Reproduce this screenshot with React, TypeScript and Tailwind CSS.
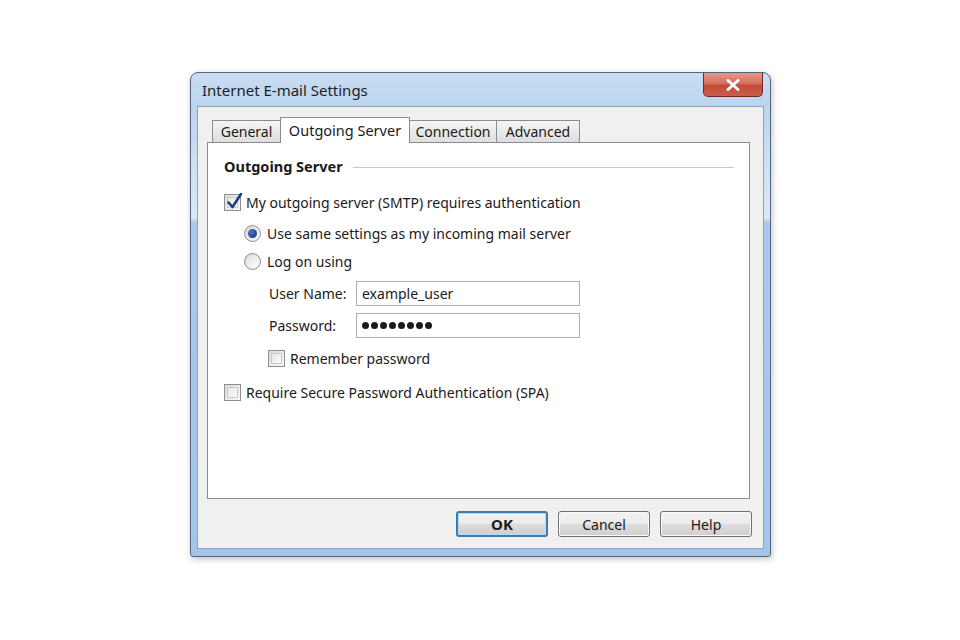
import React from "react";

const font = { fontFamily: '"Noto Sans", "Open Sans", Arial, sans-serif' };

function CheckBox({ checked }: { checked?: boolean }) {
  return (
    <div className="relative w-[17px] h-[17px] border border-[#8e8f8f] bg-gradient-to-br from-[#dcdcdc] to-[#f8f8f8] p-[2px] shrink-0">
      <div className="w-full h-full border border-[#c9c9c9] bg-gradient-to-br from-[#e6e6e6] to-[#fbfbfb]" />
      {checked && (
        <svg className="absolute left-[1px] top-[-3px]" width="17" height="18" viewBox="0 0 17 18">
          <path d="M2.5 10.5 L6.5 15 L15 2" fill="none" stroke="#1e3f7a" strokeWidth="2.6" strokeLinecap="round" strokeLinejoin="round" />
        </svg>
      )}
    </div>
  );
}

function Radio({ checked }: { checked?: boolean }) {
  return (
    <div className="w-[17px] h-[17px] rounded-full border border-[#8e8f8f] bg-gradient-to-br from-[#d6d6d6] to-[#fafafa] flex items-center justify-center shrink-0">
      {checked ? (
        <div className="w-[9px] h-[9px] rounded-full bg-[radial-gradient(circle_at_35%_35%,#4a78c2,#0f2d63)]" />
      ) : (
        <div className="w-[11px] h-[11px] rounded-full bg-gradient-to-br from-[#e2e2e2] to-[#ffffff]" />
      )}
    </div>
  );
}

function Tab({ label, active, w }: { label: string; active?: boolean; w: string }) {
  if (active) {
    return (
      <div className={`${w} h-[26px] -mb-px relative z-10 bg-white border border-[#898c95] border-b-0 flex items-center justify-center text-[14.5px] text-[#1a1a1a]`}>
        {label}
      </div>
    );
  }
  return (
    <div className={`${w} h-[22px] bg-gradient-to-b from-[#f5f5f5] to-[#dedede] border border-[#898c95] border-b-0 -ml-px first:ml-0 flex items-center justify-center text-[14px] text-[#1a1a1a]`}>
      {label}
    </div>
  );
}

function Button({ label, primary }: { label: string; primary?: boolean }) {
  return (
    <div
      className={`w-[92px] h-[26px] rounded-[3px] flex items-center justify-center text-[14px] text-[#1a1a1a] bg-[linear-gradient(#f2f2f2_0%,#ebebeb_50%,#dddddd_51%,#cfcfcf_100%)] ${
        primary ? "border-2 border-[#3d7bad] font-bold text-[15px] shadow-[inset_0_0_0_1px_#b8dcf4]" : "border border-[#707070] shadow-[inset_0_0_0_1px_#fbfbfb]"
      }`}
    >
      {label}
    </div>
  );
}

export default function App(): JSX.Element {
  return (
    <div className="w-[960px] h-[640px] bg-white pt-[72px] pl-[190px]" style={font}>
      {/* window */}
      <div className="w-[581px] h-[485px] rounded-t-[8px] rounded-b-[3px] border border-[#55657a] bg-[linear-gradient(180deg,#c9ddf3_0%,#bcd4ef_7%,#cfe1f4_20%,#dae8f6_30%,#a9c9ec_31%,#a3c5ea_100%)] flex flex-col shadow-[1px_2px_6px_rgba(0,0,0,0.25)]">
        {/* title bar */}
        <div className="h-[33px] flex items-start justify-between">
          <div className="pl-[11px] pt-[6px] text-[15px] text-[#1e1e1e]">Internet E-mail Settings</div>
          <div className="mr-[7px] w-[60px] h-[24px] rounded-b-[5px] border border-[#6e2a22] border-t-0 bg-[linear-gradient(#e4998c_0%,#d3705f_45%,#c24a38_55%,#c9604c_100%)] flex items-center justify-center">
            <svg width="14" height="12" viewBox="0 0 14 12">
              <path d="M2 1.5 L12 10.5 M12 1.5 L2 10.5" stroke="#ffffff" strokeWidth="3" strokeLinecap="round" />
            </svg>
          </div>
        </div>

        {/* client area */}
        <div className="flex-1 px-[6px] pb-[7px]">
          <div className="h-full border border-[#8ea4bd] bg-[#f0f0f0] pt-[10px] pl-[9px] pr-[13px] flex flex-col">
            {/* tabs */}
            <div className="flex items-end pl-[5px] h-[25px]">
              <Tab label="General" w="w-[69px]" />
              <Tab label="Outgoing Server" w="w-[130px] -ml-px" active />
              <Tab label="Connection" w="w-[88px]" />
              <Tab label="Advanced" w="w-[84px]" />
            </div>

            {/* panel */}
            <div className="h-[357px] bg-white border border-[#898c95] pt-[12px] pl-[16px] text-[14px] text-[#1a1a1a]">
              <div className="h-[24px] flex items-center pr-[15px]">
                <span className="font-bold text-[14.5px]">Outgoing Server</span>
                <div className="flex-1 h-px bg-[#c8c8c8] ml-[10px]" />
              </div>

              <div className="h-[24px] mt-[11px] flex items-center gap-[5px]">
                <CheckBox checked />
                <span>My outgoing server (SMTP) requires authentication</span>
              </div>

              <div className="h-[24px] mt-[7px] ml-[20px] flex items-center gap-[6px]">
                <Radio checked />
                <span>Use same settings as my incoming mail server</span>
              </div>

              <div className="h-[24px] mt-[4px] ml-[20px] flex items-center gap-[6px]">
                <Radio />
                <span>Log on using</span>
              </div>

              <div className="h-[25px] mt-[8px] ml-[45px] flex items-center">
                <span className="w-[87px]">User Name:</span>
                <div className="w-[224px] h-[25px] border border-[#abadb3] bg-white flex items-center pl-[5px]">example_user</div>
              </div>

              <div className="h-[25px] mt-[7px] ml-[45px] flex items-center">
                <span className="w-[87px]">Password:</span>
                <div className="w-[224px] h-[25px] border border-[#abadb3] bg-white flex items-center pl-[5px] gap-[2px]">
                  {Array.from({ length: 8 }).map((_, i) => (
                    <span key={i} className="w-[7px] h-[7px] rounded-full bg-[#1a1a1a]" />
                  ))}
                </div>
              </div>

              <div className="h-[24px] mt-[8px] ml-[44px] flex items-center gap-[5px]">
                <CheckBox />
                <span>Remember password</span>
              </div>

              <div className="h-[24px] mt-[10px] flex items-center gap-[5px]">
                <CheckBox />
                <span>Require Secure Password Authentication (SPA)</span>
              </div>
            </div>

            {/* buttons */}
            <div className="flex justify-end gap-[10px] mt-[12px] -mr-[2px]">
              <Button label="OK" primary />
              <Button label="Cancel" />
              <Button label="Help" />
            </div>
          </div>
        </div>
      </div>
    </div>
  );
}
